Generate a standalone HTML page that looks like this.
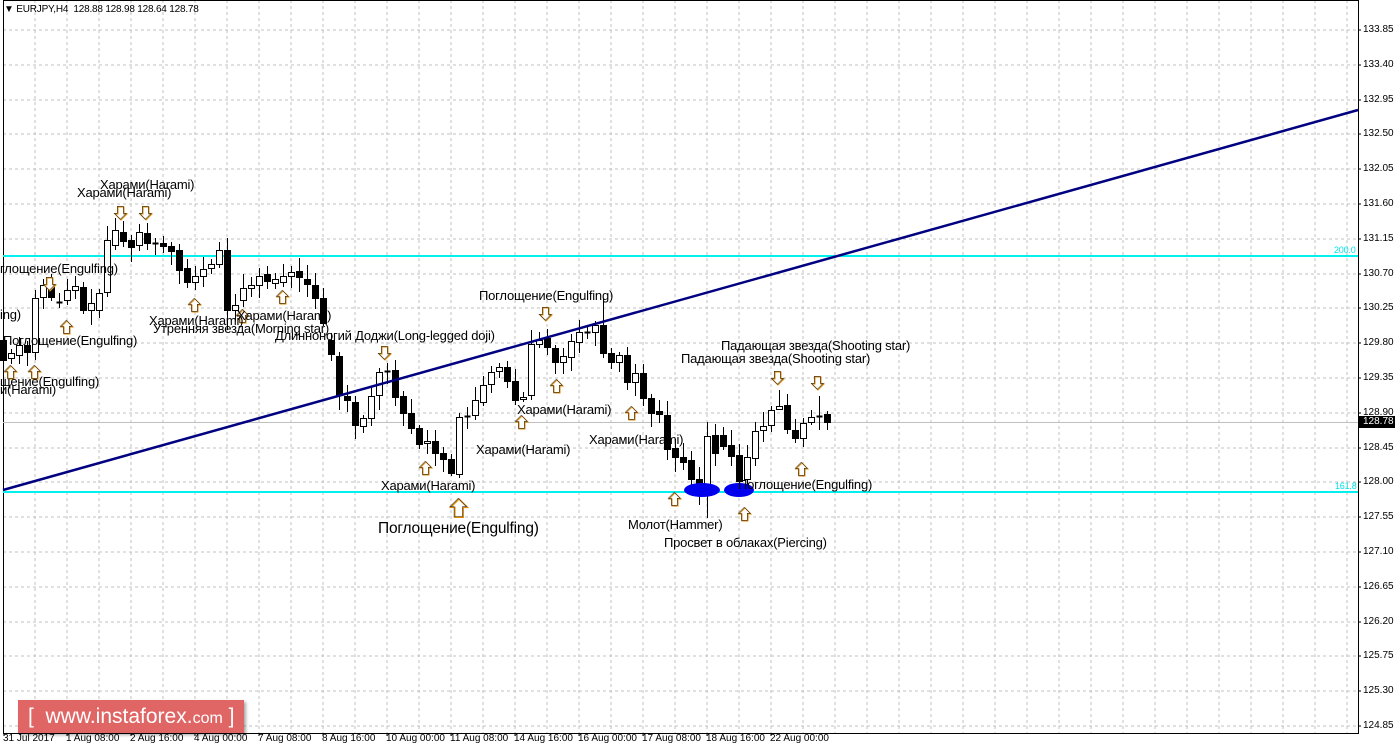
<!DOCTYPE html>
<html><head><meta charset="utf-8">
<style>
html,body{margin:0;padding:0;background:#fff;}
#wrap{position:relative;width:1398px;height:750px;overflow:hidden;background:#fff;font-family:"Liberation Sans","DejaVu Sans",sans-serif;}
svg{position:absolute;left:0;top:0;}
.l{position:absolute;font-size:13px;line-height:13px;color:#000;white-space:nowrap;letter-spacing:-0.2px;}
.p{position:absolute;left:1363px;font-size:10px;line-height:10px;color:#000;}
.t{position:absolute;top:734px;font-size:10px;line-height:10px;color:#000;white-space:nowrap;}
</style></head><body>
<div id="wrap">
<svg id="s" width="1398" height="750" xmlns="http://www.w3.org/2000/svg"></svg>

<div class="l" style="left:4px;top:5px;font-size:10px;line-height:10px">▼ EURJPY,H4&nbsp; 128.88 128.98 128.64 128.78</div>

<div class="l" style="left:100px;top:178px">Харами(Harami)</div>
<div class="l" style="left:77px;top:186px">Харами(Harami)</div>
<div class="l" style="left:0px;top:262px">глощение(Engulfing)</div>
<div class="l" style="left:0px;top:308px">ing)</div>
<div class="l" style="left:149px;top:314px">Харами(Harami)</div>
<div class="l" style="left:237px;top:309px">Харами(Harami)</div>
<div class="l" style="left:153px;top:322px">Утренняя звезда(Morning star)</div>
<div class="l" style="left:275px;top:329px">Длинноногий Доджи(Long-legged doji)</div>
<div class="l" style="left:3px;top:334px">Поглощение(Engulfing)</div>
<div class="l" style="left:0px;top:375px">щение(Engulfing)</div>
<div class="l" style="left:0px;top:383px">и(Harami)</div>
<div class="l" style="left:479px;top:289px">Поглощение(Engulfing)</div>
<div class="l" style="left:517px;top:403px">Харами(Harami)</div>
<div class="l" style="left:589px;top:433px">Харами(Harami)</div>
<div class="l" style="left:476px;top:443px">Харами(Harami)</div>
<div class="l" style="left:381px;top:479px">Харами(Harami)</div>
<div class="l" style="left:378px;top:521px;font-size:15.5px;line-height:16px">Поглощение(Engulfing)</div>
<div class="l" style="left:721px;top:339px">Падающая звезда(Shooting star)</div>
<div class="l" style="left:681px;top:352px">Падающая звезда(Shooting star)</div>
<div class="l" style="left:738px;top:478px">Поглощение(Engulfing)</div>
<div class="l" style="left:628px;top:518px">Молот(Hammer)</div>
<div class="l" style="left:664px;top:536px">Просвет в облаках(Piercing)</div>

<div class="l" style="left:1334px;top:246px;font-size:9px;line-height:9px;color:#00e5ee">200.0</div>
<div class="l" style="left:1335px;top:482px;font-size:9px;line-height:9px;color:#00e5ee">161.8</div>

<div style="position:absolute;left:1359px;top:416px;width:36px;height:12px;background:#000"></div>
<div class="p" style="top:417px;color:#fff">128.78</div>

<div style="position:absolute;left:18px;top:700px;width:226px;height:33px;background:#e06666;box-shadow:2px 2px 3px rgba(0,0,0,.35)"></div>
<div class="l" style="left:28px;top:706px;font-size:21px;line-height:21px;color:#fff;letter-spacing:0">[&nbsp; www.instaforex.<span style="font-size:16px">com</span> ]</div>

<div id="labels"></div>
</div>
<script>
var s=document.getElementById('s'),h='';
var plotR=1358,plotB=733;
for(var x=35;x<plotR;x+=32){h+='<line x1="'+x+'" y1="0" x2="'+x+'" y2="'+plotB+'" stroke="#c0c0c0" stroke-dasharray="3,3"/>';}
var prices=['133.85','133.40','132.95','132.50','132.05','131.60','131.15','130.70','130.25','129.80','129.35','128.90','128.45','128.00','127.55','127.10','126.65','126.20','125.75','125.30','124.85'];
var lab='';
for(var i=0;i<prices.length;i++){var y=Math.round(30+i*34.8);h+='<line x1="3" y1="'+y+'" x2="'+plotR+'" y2="'+y+'" stroke="#c0c0c0" stroke-dasharray="3,3"/>';h+='<line x1="'+plotR+'" y1="'+y+'" x2="'+(plotR+3)+'" y2="'+y+'" stroke="#000"/>';lab+='<div class="p" style="top:'+(y-5)+'px">'+prices[i]+'</div>';}
var times=[[3,'31 Jul 2017'],[66,'1 Aug 08:00'],[130,'2 Aug 16:00'],[194,'4 Aug 00:00'],[258,'7 Aug 08:00'],[322,'8 Aug 16:00'],[386,'10 Aug 00:00'],[450,'11 Aug 08:00'],[514,'14 Aug 16:00'],[578,'16 Aug 00:00'],[642,'17 Aug 08:00'],[706,'18 Aug 16:00'],[770,'22 Aug 00:00']];
for(i=0;i<times.length;i++){lab+='<div class="t" style="left:'+times[i][0]+'px">'+times[i][1]+'</div>';h+='<line x1="'+(times[i][0]+1)+'" y1="'+plotB+'" x2="'+(times[i][0]+1)+'" y2="'+(plotB+3)+'" stroke="#000"/>';}
h+='<rect x="3.5" y="0.5" width="'+(plotR-3)+'" height="'+(plotB)+'" fill="none" stroke="#000"/>';
h+='<line x1="3" y1="422.5" x2="'+plotR+'" y2="422.5" stroke="#c0c0c0"/>';
h+='<line x1="3" y1="256" x2="'+plotR+'" y2="256" stroke="#00f0f0" stroke-width="2"/>';
h+='<line x1="3" y1="492" x2="'+plotR+'" y2="492" stroke="#00f0f0" stroke-width="2"/>';
var c=[[3,340,360],[11,358,353],[19,355,345],[27,345,352],[35,352,298],[43,297,285],[51,285,297],[59,302,302],[67,300,290],[75,290,286],[83,287,310],[91,310,303],[99,310,293],[107,292,240],[115,245,230],[123,232,241],[131,240,247],[139,245,232],[147,233,243],[155,243,243],[163,243,246],[171,246,251],[179,250,270],[187,268,282],[195,282,276],[203,276,269],[211,268,264],[219,264,250],[227,250,310],[235,310,305],[243,300,288],[251,288,285],[259,285,276],[267,274,281],[275,283,279],[283,282,276],[291,276,272],[299,271,277],[307,279,284],[315,285,298],[323,298,323],[331,340,354],[339,356,395],[347,396,400],[355,402,425],[363,426,418],[371,418,396],[379,395,372],[387,371,371],[395,370,397],[403,396,413],[411,413,428],[419,428,444],[427,443,441],[435,441,453],[443,453,459],[451,459,473],[459,474,417],[467,416,416],[475,415,400],[483,402,385],[491,384,372],[499,371,367],[507,367,381],[515,381,400],[523,399,397],[531,395,344],[539,344,340],[547,338,347],[555,348,362],[563,362,356],[571,357,341],[579,342,332],[587,332,332],[595,332,325],[603,325,353],[611,353,362],[619,362,355],[627,355,382],[635,382,373],[643,373,398],[651,398,413],[659,411,414],[667,415,449],[675,448,457],[683,457,462],[691,460,479],[699,479,491],[707,490,436],[715,435,453],[723,435,446],[731,445,456],[739,455,481],[747,479,457],[755,458,431],[763,430,426],[771,425,410],[779,409,406],[787,405,429],[795,430,438],[803,438,423],[811,422,417],[819,416,416],[827,414,422]];
var seed=7;function r(){seed=(seed*9301+49297)%233280;return seed/233280;}
var wk='',bd='';
var special={707:[422,518],779:[390,410],819:[396,430],603:[298,358],459:[413,478],531:[330,400],339:[352,410],227:[238,330],115:[218,250],35:[290,360]};
for(i=0;i<c.length;i++){var x=c[i][0]+0.5,o=c[i][1],cl=c[i][2],t=Math.min(o,cl),b=Math.max(o,cl);
var hi=t-3-Math.round(r()*12),lo=b+3+Math.round(r()*12);if(special[c[i][0]]){hi=special[c[i][0]][0];lo=special[c[i][0]][1];}
wk+='<line x1="'+x+'" y1="'+hi+'" x2="'+x+'" y2="'+lo+'" stroke="#000"/>';
if(b-t<1){bd+='<line x1="'+(x-3)+'" y1="'+t+'.5" x2="'+(x+3)+'" y2="'+t+'.5" stroke="#000" stroke-width="2"/>';}
else if(cl<o){bd+='<rect x="'+(x-3)+'" y="'+(t+0.5)+'" width="6" height="'+(b-t)+'" fill="#fff" stroke="#000"/>';}
else{bd+='<rect x="'+(x-3.5)+'" y="'+t+'" width="7" height="'+(b-t+1)+'" fill="#000"/>';}}
h+=wk+bd;
h+='<line x1="3" y1="490" x2="'+plotR+'" y2="110" stroke="#000080" stroke-width="2.5"/>';
h+='<ellipse cx="702" cy="490" rx="18" ry="7" fill="#0000ee"/><ellipse cx="739" cy="490" rx="15" ry="7" fill="#0000ee"/>';
function arr(cx,ty,dir,sz){var k=sz||1,w=3*k,W=6*k,H=13*k,hh=6*k,p;
if(dir=='u'){p=[[cx,ty],[cx+W,ty+hh],[cx+w,ty+hh],[cx+w,ty+H],[cx-w,ty+H],[cx-w,ty+hh],[cx-W,ty+hh]];}
else{p=[[cx-w,ty],[cx+w,ty],[cx+w,ty+H-hh],[cx+W,ty+H-hh],[cx,ty+H],[cx-W,ty+H-hh],[cx-w,ty+H-hh]];}
var ps=p.map(function(a){return a[0]+','+a[1]}).join(' ');
return '<polygon points="'+ps+'" fill="#fff" stroke="#e08a00" stroke-width="'+(k>1?1.5:1)+'"/><polygon points="'+ps+'" fill="none" stroke="#333" stroke-width="0.6" transform="translate(-0.7,-0.7)"/>';}
var A=[[121,207,'d'],[146,207,'d'],[50,278,'d'],[385,347,'d'],[546,308,'d'],[778,372,'d'],[818,377,'d'],[67,321,'u'],[195,299,'u'],[283,291,'u'],[11,366,'u'],[35,366,'u'],[426,462,'u'],[522,416,'u'],[557,380,'u'],[632,407,'u'],[675,493,'u'],[745,508,'u'],[802,463,'u'],[243,310,'u']];
for(i=0;i<A.length;i++)h+=arr(A[i][0],A[i][1],A[i][2]);
h+=arr(459,499,'u',1.4);
s.innerHTML=h;
document.getElementById('labels').innerHTML=lab;
</script>
</body></html>
